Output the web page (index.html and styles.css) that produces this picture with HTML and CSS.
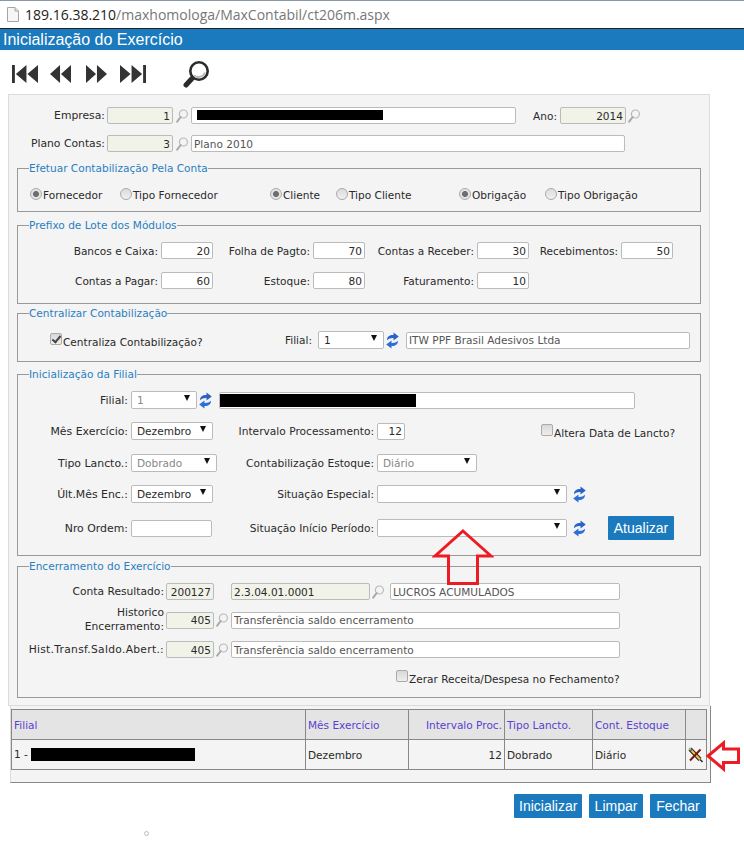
FILE: index.html
```html
<!DOCTYPE html>
<html lang="pt-BR">
<head>
    <meta charset="UTF-8">
    <meta name="viewport" content="width=device-width, initial-scale=1.0">
    <title>Inicialização do Exercício</title>
    <link rel="stylesheet" href="styles.css">
</head>
<body>
    <svg width="0" height="0" class="defs">
        <symbol id="lupa" viewBox="0 0 12 14">
            <circle cx="7.4" cy="5" r="4" fill="#f4f4f4" stroke="#b9b9b9" stroke-width="1.2"/>
            <path d="M4.6 8 L1.2 12.6" stroke="#a9a9a9" stroke-width="2" stroke-linecap="round"/>
        </symbol>
        <symbol id="refresh" viewBox="0 0 13 17">
            <path d="M1 8.2 C1 4.2 4 2.8 7.5 3 L7.5 0.4 L12.8 4.6 L7.5 8.6 L7.5 6 C5 5.8 3 6.4 1 8.2 Z" fill="#2a62c8"/>
            <path d="M12 8.8 C12 12.8 9 14.2 5.5 14 L5.5 16.6 L0.2 12.4 L5.5 8.4 L5.5 11 C8 11.2 10 10.6 12 8.8 Z" fill="#2f6ed6"/>
        </symbol>
    </svg>

    <div class="address-bar">
        <svg class="doc-icon" width="12" height="15" viewBox="0 0 12 15">
            <path d="M0.5 0.5 H8 L11.5 4 V14.5 H0.5 Z" fill="#f6f6f6" stroke="#a5a5a5"/>
            <path d="M8 0.5 V4 H11.5" fill="#e4e4e4" stroke="#a5a5a5"/>
        </svg>
        <span class="url"><b>189.16.38.210</b>/maxhomologa/MaxContabil/ct206m.aspx</span>
    </div>
    <div class="title-bar">Inicialização do Exercício</div>

    <div class="toolbar">
        <svg width="26" height="20" viewBox="0 0 27 20" preserveAspectRatio="none"><path d="M0 1 H3 V19 H0 Z M15 1 V19 L4 10 Z M27 1 V19 L16 10 Z" fill="#333"/></svg>
        <svg class="nav-prev" width="21" height="20" viewBox="0 0 23 20" preserveAspectRatio="none"><path d="M11 1 V19 L0 10 Z M23 1 V19 L12 10 Z" fill="#333"/></svg>
        <svg class="nav-next" width="21" height="20" viewBox="0 0 23 20" preserveAspectRatio="none"><path d="M0 1 V19 L11 10 Z M12 1 V19 L23 10 Z" fill="#333"/></svg>
        <svg class="nav-last" width="26" height="20" viewBox="0 0 27 20" preserveAspectRatio="none"><path d="M0 1 V19 L11 10 Z M12 1 V19 L23 10 Z M24 1 H27 V19 H24 Z" fill="#333"/></svg>
        <svg class="nav-find" width="27" height="27" viewBox="0 0 27 27">
            <circle cx="16" cy="10" r="8.7" fill="#fff" stroke="#2b2b2b" stroke-width="2.6"/>
            <path d="M11 14.5 A7 7 0 0 0 22 11.5" fill="none" stroke="#bbb" stroke-width="2"/>
            <path d="M9 17.5 L3 24" stroke="#2b2b2b" stroke-width="5" stroke-linecap="round"/>
        </svg>
    </div>

    <div class="panel">
        <div class="row row-empresa">
            <label class="lbl lbl-main">Empresa:</label>
            <input class="inp ro num w66" value="1" readonly>
            <svg class="lupa"><use href="#lupa"/></svg>
            <div class="inp desc w325"><span class="censor censor-empresa"></span></div>
            <label class="lbl lbl-ano">Ano:</label>
            <input class="inp ro num w66" value="2014" readonly>
            <svg class="lupa lupa-ano"><use href="#lupa"/></svg>
        </div>
        <div class="row row-plano">
            <label class="lbl lbl-main">Plano Contas:</label>
            <input class="inp ro num w66" value="3" readonly>
            <svg class="lupa"><use href="#lupa"/></svg>
            <input class="inp desc w434" value="Plano 2010" readonly>
        </div>

        <fieldset class="box box-conta">
            <legend>Efetuar Contabilização Pela Conta</legend>
            <div class="radios">
                <label class="opt w90"><span class="radio on"></span>Fornecedor</label>
                <label class="opt w150"><span class="radio"></span>Tipo Fornecedor</label>
                <label class="opt w66"><span class="radio on"></span>Cliente</label>
                <label class="opt w123"><span class="radio"></span>Tipo Cliente</label>
                <label class="opt w86"><span class="radio on"></span>Obrigação</label>
                <label class="opt"><span class="radio"></span>Tipo Obrigação</label>
            </div>
        </fieldset>

        <fieldset class="box box-prefixo">
            <legend>Prefixo de Lote dos Módulos</legend>
            <div class="prefixos">
                <label class="lbl">Bancos e Caixa:</label><input class="inp num" value="20">
                <label class="lbl">Folha de Pagto:</label><input class="inp num" value="70">
                <label class="lbl">Contas a Receber:</label><input class="inp num" value="30">
                <label class="lbl">Recebimentos:</label><input class="inp num" value="50">
                <label class="lbl">Contas a Pagar:</label><input class="inp num" value="60">
                <label class="lbl">Estoque:</label><input class="inp num" value="80">
                <label class="lbl">Faturamento:</label><input class="inp num" value="10">
            </div>
        </fieldset>

        <fieldset class="box box-central">
            <legend>Centralizar Contabilização</legend>
            <div class="row-central">
                <label class="check-opt check-central w234"><span class="check on"></span>Centraliza Contabilização?</label>
                <label class="lbl lbl-filial">Filial:</label>
                <div class="sel w66">1</div>
                <svg class="refresh"><use href="#refresh"/></svg>
                <input class="inp desc w284" value="ITW PPF Brasil Adesivos Ltda" readonly>
            </div>
        </fieldset>

        <fieldset class="box box-filial">
            <legend>Inicialização da Filial</legend>
            <div class="filial-rows">
                <div class="row row-f1">
                    <label class="lbl lbl-f">Filial:</label>
                    <div class="sel off w66">1</div>
                    <svg class="refresh"><use href="#refresh"/></svg>
                    <div class="inp desc w416 ml7"><span class="censor censor-filial"></span></div>
                </div>
                <div class="row row-f2">
                    <label class="lbl lbl-f">Mês Exercício:</label>
                    <div class="sel w82">Dezembro</div>
                    <label class="lbl lbl-f2 w161">Intervalo Processamento:</label>
                    <input class="inp num w28" value="12">
                    <label class="check-opt check-altera"><span class="check"></span>Altera Data de Lancto?</label>
                </div>
                <div class="row row-f3">
                    <label class="lbl lbl-f">Tipo Lancto.:</label>
                    <div class="sel off w86">Dobrado</div>
                    <label class="lbl lbl-f2 w157">Contabilização Estoque:</label>
                    <div class="sel off w100">Diário</div>
                </div>
                <div class="row row-f4">
                    <label class="lbl lbl-f">Últ.Mês Enc.:</label>
                    <div class="sel w82">Dezembro</div>
                    <label class="lbl lbl-f2 w161">Situação Especial:</label>
                    <div class="sel w190"></div>
                    <svg class="refresh ml6"><use href="#refresh"/></svg>
                </div>
                <div class="row row-f5">
                    <label class="lbl lbl-f">Nro Ordem:</label>
                    <input class="inp w81">
                    <label class="lbl lbl-f2 w162">Situação Início Período:</label>
                    <div class="sel w190"></div>
                    <svg class="refresh ml6"><use href="#refresh"/></svg>
                    <button class="btn btn-atualizar">Atualizar</button>
                </div>
            </div>
        </fieldset>

        <fieldset class="box box-enc">
            <legend>Encerramento do Exercício</legend>
            <div class="row row-e1">
                <label class="lbl lbl-e">Conta Resultado:</label>
                <input class="inp ro num w48" value="200127" readonly>
                <input class="inp ro w139 ml17" value="2.3.04.01.0001" readonly>
                <svg class="lupa"><use href="#lupa"/></svg>
                <input class="inp desc w230" value="LUCROS ACUMULADOS" readonly>
            </div>
            <div class="row row-e2">
                <label class="lbl lbl-e lbl-duas">Historico<br>Encerramento:</label>
                <input class="inp ro num w48" value="405" readonly>
                <svg class="lupa"><use href="#lupa"/></svg>
                <input class="inp desc w389" value="Transferência saldo encerramento" readonly>
            </div>
            <div class="row row-e3">
                <label class="lbl lbl-e lbl-hist">Hist.Transf.Saldo.Abert.:</label>
                <input class="inp ro num w48" value="405" readonly>
                <svg class="lupa"><use href="#lupa"/></svg>
                <input class="inp desc w389" value="Transferência saldo encerramento" readonly>
            </div>
            <label class="check-opt check-zerar"><span class="check"></span>Zerar Receita/Despesa no Fechamento?</label>
        </fieldset>
    </div>

    <div class="grid-panel">
        <table class="grid">
            <thead>
                <tr>
                    <th class="c-filial">Filial</th>
                    <th class="c-mes">Mês Exercício</th>
                    <th class="c-int">Intervalo Proc.</th>
                    <th class="c-tipo">Tipo Lancto.</th>
                    <th class="c-cont">Cont. Estoque</th>
                    <th class="c-acao"></th>
                </tr>
            </thead>
            <tbody>
                <tr>
                    <td>1 - <span class="censor censor-grid"></span></td>
                    <td>Dezembro</td>
                    <td class="c-int">12</td>
                    <td>Dobrado</td>
                    <td>Diário</td>
                    <td class="c-acao">
                        <svg class="del-icon" width="15" height="16" viewBox="0 0 15 16">
                            <path d="M2 2 L12 12.5" stroke="#2b2b2b" stroke-width="4.2"/>
                            <path d="M3.5 3.5 L12 12.5" stroke="#ecc23f" stroke-width="2"/>
                            <path d="M1.2 1.2 L3 3" stroke="#a8a8a8" stroke-width="2.4"/>
                            <path d="M12 12.5 L14.5 15" stroke="#333" stroke-width="1.6"/>
                            <path d="M12.5 2.5 L2 13.5" stroke="#7d1208" stroke-width="1.9"/>
                        </svg>
                    </td>
                </tr>
            </tbody>
        </table>
    </div>

    <div class="actions">
        <button class="btn">Inicializar</button>
        <button class="btn">Limpar</button>
        <button class="btn">Fechar</button>
    </div>

    <span class="dot"></span>

    <!-- setas vermelhas desenhadas por cima do print -->
    <svg class="arrow arrow-up" width="62" height="58" viewBox="0 0 62 58">
        <path d="M31 3 L59 28 H45.5 V55.5 H16.5 V28 H3 Z" fill="none" stroke="#ed1c24" stroke-width="3"/>
    </svg>
    <svg class="arrow arrow-left" width="36" height="32" viewBox="0 0 36 32">
        <path d="M3 16 L18.5 3 V9 H33.5 V22.5 H18.5 V29 Z" fill="none" stroke="#ed1c24" stroke-width="3"/>
    </svg>
</body>
</html>
```

FILE: styles.css
```css
body, html {
    margin: 0;
    padding: 0;
}

body {
    position: relative;
    width: 744px;
    height: 849px;
    overflow: hidden;
    background-color: white;
    font-family: "DejaVu Sans", Verdana, sans-serif;
    font-size: 10.55px;
    color: #2a2a2a;
}

.defs {
    position: absolute;
}

.address-bar {
    height: 27px;
    display: flex;
    align-items: center;
    padding-left: 7px;
    border-top: 1px solid #8a97a8;
    border-bottom: 1px solid #222;
}

.doc-icon {
    margin-right: 6px;
}

.url {
    font-family: "Open Sans", "Noto Sans", sans-serif;
    font-size: 14px;
    color: #777;
}

.url b {
    font-weight: normal;
    color: #222;
}

.title-bar {
    height: 21px;
    line-height: 21px;
    padding-left: 3px;
    background-color: #1a7abd;
    color: white;
    font-family: "Liberation Sans", Arial, sans-serif;
    font-size: 16px;
}

.toolbar {
    height: 40px;
    padding-top: 4px;
    display: flex;
    align-items: center;
    padding-left: 12px;
}

.nav-prev {
    margin-left: 12px;
}

.nav-next {
    margin-left: 15px;
}

.nav-last {
    margin-left: 13px;
}

.nav-find {
    margin-left: 37px;
}

.panel {
    margin-left: 8px;
    width: 700px;
    height: 609px;
    background-color: #f4f4f4;
    border: 1px solid #dcdcdc;
    padding-top: 1px;
    overflow: hidden;
}

.row {
    display: flex;
    align-items: center;
}

.lbl {
    text-align: right;
    white-space: nowrap;
}

.inp {
    display: block;
    box-sizing: border-box;
    height: 17px;
    padding: 0 2px;
    background-color: white;
    border: 1px solid #bbb;
    border-radius: 2px;
    font-family: "DejaVu Sans", Verdana, sans-serif;
    font-size: 10.55px;
    color: #2a2a2a;
    outline: none;
}

.ro {
    background-color: #f1f3e9;
}

.num {
    text-align: right;
}

.desc {
    color: #555;
}

.sel {
    position: relative;
    box-sizing: border-box;
    height: 18px;
    line-height: 16px;
    padding-left: 5px;
    background-color: white;
    border: 1px solid #bbb;
    border-radius: 2px;
    white-space: nowrap;
}

.sel::after {
    content: '';
    position: absolute;
    right: 6px;
    top: 3px;
    border-left: 3.5px solid transparent;
    border-right: 3.5px solid transparent;
    border-top: 6px solid #111;
}

.sel.off {
    color: #888;
}

.lupa {
    width: 12px;
    height: 14px;
    margin: 0 3px;
    flex: none;
}

.lupa-ano {
    margin: 0 0 0 2px;
}

.refresh {
    width: 13px;
    height: 17px;
    margin-left: 2px;
    flex: none;
}

.censor {
    display: block;
    height: 13px;
    background-color: black;
}

.censor-empresa {
    width: 186px;
    height: 10px;
    margin: 2px 0 0 3px;
}

.censor-filial {
    width: 196px;
    margin: 1px 0 0 -2px;
}

.censor-grid {
    display: inline-block;
    width: 164px;
    vertical-align: middle;
}

.w28 { width: 28px; }
.w48 { width: 48px; }
.w66 { width: 66px; }
.w81 { width: 81px; }
.w82 { width: 82px; }
.w86 { width: 86px; }
.w90 { width: 90px; }
.w100 { width: 100px; }
.w123 { width: 123px; }
.w139 { width: 139px; }
.w150 { width: 150px; }
.w157 { width: 157px; }
.w161 { width: 161px; }
.w162 { width: 162px; }
.w190 { width: 190px; }
.w230 { width: 230px; }
.w234 { width: 234px; }
.w284 { width: 284px; }
.w325 { width: 325px; }
.w389 { width: 389px; }
.w416 { width: 416px; }
.w434 { width: 434px; }
.ml6 { margin-left: 6px; }
.ml7 { margin-left: 7px; }
.ml17 { margin-left: 17px; }

.row-empresa {
    margin-top: 11px;
}

.row-plano {
    margin-top: 11px;
}

.lbl-main {
    width: 96px;
    margin-right: 2px;
    font-size: 10.8px;
}

.lbl-ano {
    width: 41px;
    margin-right: 3px;
}

.box {
    margin: 0 8px 0 8px;
    padding: 0;
    width: 684px;
    box-sizing: border-box;
    border: 1px solid #999;
    min-inline-size: 0;
}

.box legend {
    margin-left: 11px;
    padding: 0;
    color: #2a7fc0;
    line-height: 13px;
}

.box-conta {
    height: 50px;
    margin-top: 10px;
}

.box-prefixo {
    height: 85px;
    margin-top: 7px;
}

.box-central {
    height: 55px;
    margin-top: 3px;
}

.box-filial {
    height: 188px;
    margin-top: 6px;
}

.box-enc {
    height: 138px;
    margin-top: 4px;
}

.radios {
    display: flex;
    padding: 14px 0 0 12px;
}

.opt {
    display: flex;
    align-items: center;
    white-space: nowrap;
}

.radio {
    width: 12px;
    height: 12px;
    margin: -3px 1px 0 0;
    box-sizing: border-box;
    border: 1px solid #aaa;
    border-radius: 50%;
    background: linear-gradient(#dcdcdc, #f0f0f0);
    flex: none;
}

.radio.on {
    background: radial-gradient(circle, #6e6e6e 0 2.6px, #e4e4e4 3.4px);
}

.prefixos {
    display: grid;
    grid-template-columns: 140px 55px 97px 55px 109px 55px 89px 55px;
    row-gap: 13px;
    padding-top: 10px;
    align-items: center;
}

.prefixos .inp {
    width: 52px;
    margin-left: 3px;
}

.row-central {
    display: flex;
    align-items: center;
    padding: 11px 0 0 32px;
}

.check-opt {
    display: flex;
    align-items: center;
    white-space: nowrap;
}

.check-central {
    margin-top: 4px;
}

.check {
    position: relative;
    width: 12px;
    height: 12px;
    margin: -6px 1px 0 0;
    box-sizing: border-box;
    border: 1px solid #aaa;
    border-radius: 2px;
    background: linear-gradient(#d8d8d8, #eee);
    flex: none;
}

.check.on::after {
    content: '';
    position: absolute;
    left: 3px;
    top: 0;
    width: 3px;
    height: 7px;
    border-right: 2px solid #444;
    border-bottom: 2px solid #444;
    transform: rotate(40deg);
}

.lbl-filial {
    width: 28px;
    margin-right: 6px;
}

.box-central .refresh {
    margin-right: 7px;
}

.filial-rows {
    padding-top: 10px;
}

.row-f2 {
    margin-top: 13px;
}

.row-f3 {
    margin-top: 14px;
}

.row-f4 {
    margin-top: 13px;
}

.row-f5 {
    margin-top: 13px;
}

.lbl-f {
    width: 110px;
    margin-right: 3px;
    font-size: 10.9px;
}

.lbl-f2 {
    margin-right: 3px;
    font-size: 10.65px;
}

.check-altera {
    margin-left: 136px;
    margin-top: 4px;
}

.btn {
    height: 24px;
    padding: 0 5px;
    background-color: #1a7abd;
    color: white;
    border: none;
    border-radius: 1px;
    font-family: "Liberation Sans", Arial, sans-serif;
    font-size: 14px;
}

.btn-atualizar {
    width: 66px;
    margin-left: 22px;
}

.row-e1 {
    margin-top: 10px;
}

.row-e2 {
    margin-top: 6px;
}

.row-e3 {
    margin-top: 7px;
}

.lbl-e {
    width: 146px;
    margin-right: 2px;
    font-size: 10.7px;
}

.lbl-duas {
    line-height: 14px;
}

.lbl-hist {
    letter-spacing: 0.3px;
}

.row-e1 .lupa {
    margin: 0 6px 0 2px;
}

.row-e2 .lupa, .row-e3 .lupa {
    margin: 0 3px 0 2px;
}

.check-zerar {
    margin: 15px 0 0 378px;
}

.grid-panel {
    margin-left: 10px;
    width: 701px;
    height: 77px;
    padding-top: 3px;
    box-sizing: border-box;
    background-color: #f4f4f4;
    border-left: 1px solid #dcdcdc;
    border-right: 1px solid #888;
    border-bottom: 1px solid #888;
}

.grid {
    width: 695px;
    height: 61px;
    table-layout: fixed;
    border-collapse: collapse;
}

.grid th, .grid td {
    box-sizing: border-box;
    border: 1px solid #888;
    padding: 0 2px;
    text-align: left;
    font-weight: normal;
    white-space: nowrap;
    height: 30px;
}

.grid th {
    background-color: #e4e4e4;
    color: #5a3fd0;
}

.grid .c-int {
    text-align: right;
}

.grid .c-filial { width: 294px; }
.grid .c-mes { width: 103px; }
.grid th.c-int { width: 96px; }
.grid .c-tipo { width: 88px; }
.grid .c-cont { width: 93px; }
.grid th.c-acao { width: 21px; }

.grid td.c-acao {
    padding: 0 0 0 2px;
}

.del-icon {
    display: block;
}

.actions {
    display: flex;
    justify-content: flex-end;
    gap: 7px;
    width: 706px;
    margin-top: 11px;
}

.actions .btn:nth-child(1) { width: 68px; }
.actions .btn:nth-child(2) { width: 54px; }
.actions .btn:nth-child(3) { width: 56px; }

.dot {
    position: absolute;
    left: 144px;
    top: 831px;
    width: 3px;
    height: 3px;
    border: 1px solid #bbb;
    border-radius: 50%;
}

.arrow {
    position: absolute;
}

.arrow-up {
    left: 432px;
    top: 528px;
}

.arrow-left {
    left: 705px;
    top: 740px;
}
```
